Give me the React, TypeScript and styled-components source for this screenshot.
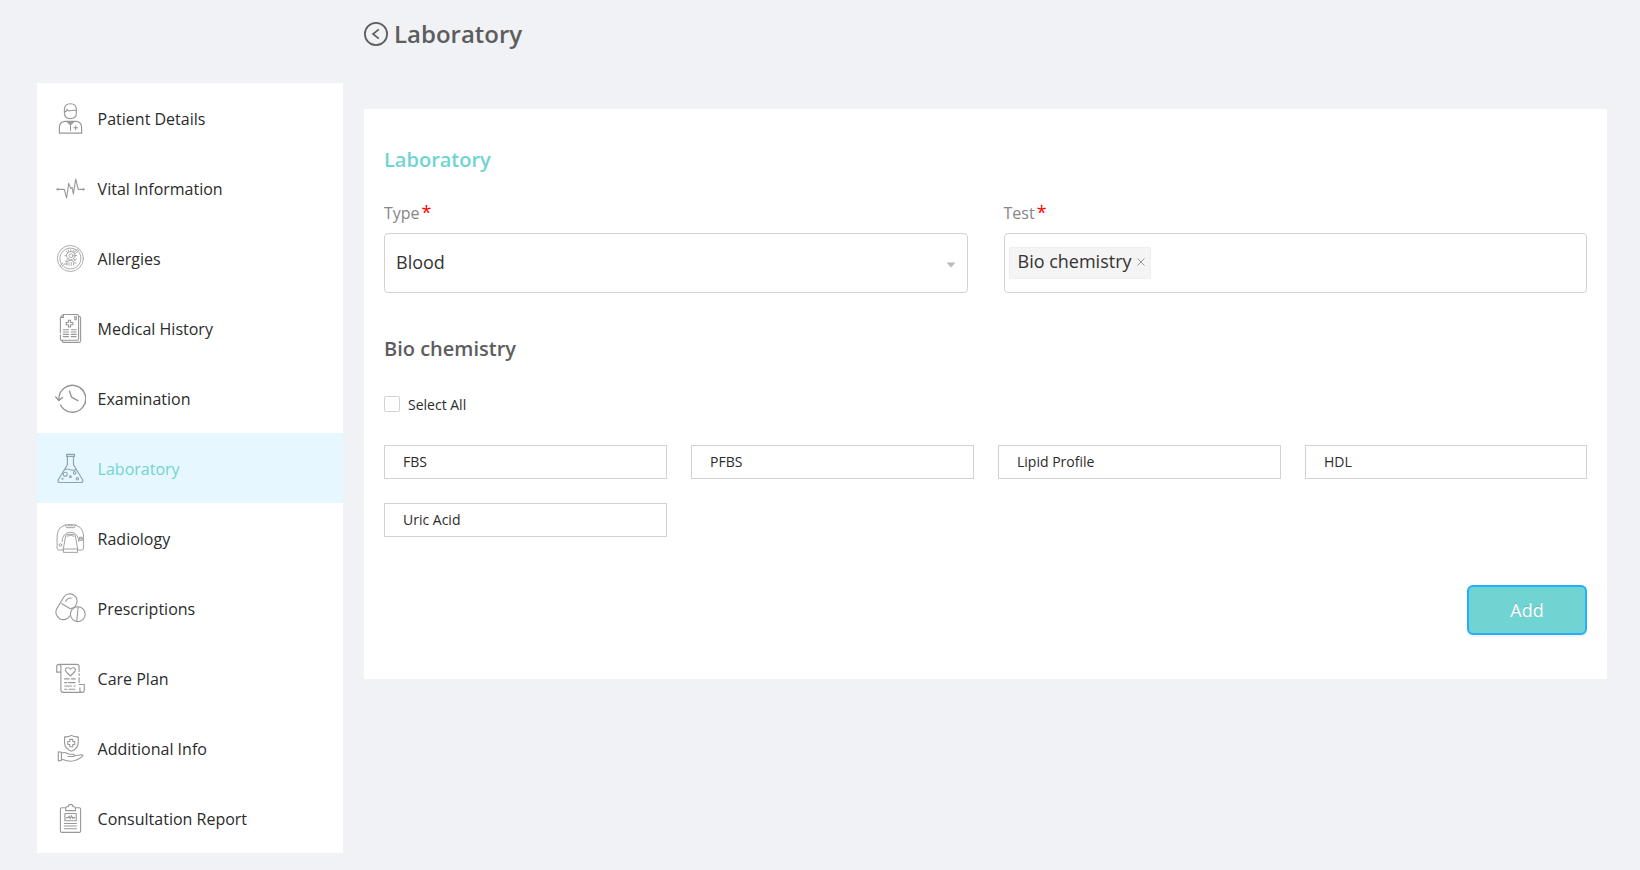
import React from 'react';
import styled, { createGlobalStyle } from 'styled-components';

const GlobalStyle = createGlobalStyle`
  *, *::before, *::after { box-sizing: border-box; }
  body {
    margin: 0;
    background: #f0f2f5;
    font-family: 'Open Sans', sans-serif;
    color: #2b2b2b;
  }
  h1, h2, h3 { margin: 0; font-weight: 600; }
`;

const Page = styled.div`
  display: flex;
  align-items: flex-start;
  min-height: 870px;
  padding: 0 33px 0 37px;
`;

const Sidebar = styled.nav`
  flex: 0 0 306px;
  margin-top: 83px;
  background: #fff;
`;

const NavItem = styled.a<{ $active?: boolean }>`
  display: flex;
  align-items: center;
  height: 70px;
  padding: 0 17px 0;
  font-size: 16px;
  line-height: 24px;
  color: ${(p) => (p.$active ? '#70d4d2' : '#2b2b2b')};
  background: ${(p) => (p.$active ? '#e6f7ff' : '#fff')};
`;

const NavIcon = styled.svg<{ $active?: boolean }>`
  flex: none;
  width: 32px;
  height: 32px;
  margin: 2px 11.6px 0 0;
  fill: none;
  stroke: ${(p) => (p.$active ? '#8aa6b3' : '#989898')};
  stroke-width: 1.1;
  stroke-linecap: round;
  stroke-linejoin: round;
`;

const NavLabel = styled.span`
  padding-top: 2px;
`;

const Main = styled.main`
  flex: 1;
  margin-left: 21px;
`;

const Header = styled.header`
  display: flex;
  align-items: center;
  height: 109px;
  padding-bottom: 41px;
`;

const BackIcon = styled.svg`
  width: 24px;
  height: 24px;
  margin-right: 6px;
  fill: none;
  stroke: #5d5d5d;
`;

const PageTitle = styled.h1`
  font-size: 24px;
  line-height: 36px;
  color: #5d5d5d;
`;

const Panel = styled.section`
  height: 570px;
  padding: 36px 20px 0;
  background: #fff;
`;

const SectionTitle = styled.h2`
  font-size: 20px;
  line-height: 30px;
  color: #70d4d2;
`;

const FieldRow = styled.div`
  display: grid;
  grid-template-columns: 1fr 1fr;
  column-gap: 36px;
  margin-top: 26px;
`;

const Label = styled.div`
  display: flex;
  height: 32px;
  font-size: 16px;
  line-height: 24px;
  color: #868686;
`;

const Required = styled.span`
  margin-left: 2px;
  font-size: 18px;
  line-height: 22px;
  color: #f00;
`;

const Control = styled.div<{ $tags?: boolean }>`
  display: flex;
  align-items: center;
  justify-content: space-between;
  height: 60px;
  padding: ${(p) => (p.$tags ? '0 4px' : '0 11px')};
  border: 1px solid #d2d2d2;
  border-radius: 4px;
  font-size: 18px;
  color: #333;
`;

const ControlValue = styled.span`
  padding-bottom: 2px;
`;

const Caret = styled.svg`
  width: 10px;
  height: 6px;
  margin-top: 3px;
  fill: #b9b9b9;
`;

const Tag = styled.span`
  display: flex;
  align-items: center;
  height: 32px;
  padding: 0 5px 5px 8px;
  border: 1px solid #eee;
  border-radius: 2px;
  background: #f4f4f4;
`;

const TagRemove = styled.svg`
  width: 8px;
  height: 8px;
  margin: 3px 0 0 5px;
  stroke: #999;
`;

const GroupTitle = styled.h3`
  margin-top: 41px;
  font-size: 20px;
  line-height: 30px;
  color: #5d5d5d;
`;

const CheckRow = styled.label`
  display: flex;
  align-items: center;
  height: 20px;
  margin-top: 30px;
  font-size: 14px;
`;

const CheckBox = styled.span`
  width: 16px;
  height: 16px;
  margin-right: 8px;
  border: 1px solid #d2d2d2;
  border-radius: 2px;
`;

const TestGrid = styled.div`
  display: grid;
  grid-template-columns: repeat(3, 283px) 1fr;
  gap: 24px;
  margin-top: 31px;
`;

const TestCard = styled.div`
  height: 34px;
  padding-left: 18px;
  border: 1px solid #d2d2d2;
  font-size: 14px;
  line-height: 32px;
`;

const Actions = styled.div`
  display: flex;
  justify-content: flex-end;
  margin-top: 48px;
`;

const AddButton = styled.button`
  width: 120px;
  height: 50px;
  padding: 0;
  border: 2px solid #24aeff;
  border-radius: 6px;
  background: #70d4d2;
  box-shadow: 0 2px 0 rgba(0, 0, 0, 0.045);
  color: #fff;
  font: 400 18px 'Open Sans', sans-serif;
  text-shadow: 0 -1px 0 rgba(0, 0, 0, 0.12);
`;

const navigation: { label: string; active?: boolean; icon: React.ReactNode }[] = [
  {
    label: 'Patient Details',
    icon: (
      <>
        <path d="M10.4 6.5Q10.5.8 16.4.8t6 5.7v3.2q0 5.9-6 5.9t-6-5.9z" />
        <path d="M10.7 8.9q1.8-.2 2.3-2.6 1 2 3.2 1.4t6.1-.3" />
        <path d="M5.4 30.2v-5.8q0-5.3 5.4-6h11.4q5.4.7 5.4 6v5.8z" strokeWidth="1.2" />
        <path d="M13 18.6h7l-3.5 3.2z" fill="#a0a0a0" />
        <path d="M16.5 22v5.6M21.7 22.8v4M19.7 24.8h4" />
      </>
    ),
  },
  {
    label: 'Vital Information',
    icon: (
      <>
        <path d="M4 16.4h6.3l2.3 8.6 2.1-14.6 2.1 5.2 1.4-1.1 1.2 6.7 2.3-15.1 2.5 10.3H29" />
        <circle cx="3.5" cy="16.4" r=".6" />
        <circle cx="29.6" cy="16.4" r=".6" />
      </>
    ),
  },
  {
    label: 'Allergies',
    icon: (
      <g strokeWidth=".8">
        <circle cx="16.4" cy="15.5" r="13" />
        <path d="M24.8 8.8a10.7 10.7 0 0 1-15 15M8 22.2a10.7 10.7 0 0 1 15-15M25 7.2l-4 4M11 20.6l-3.4 3.3M23.5 6l-3 3M9 20l-2.5 2.4" />
        <circle cx="16.8" cy="12.7" r="4.2" />
        <circle cx="17" cy="12.8" r="2" />
        <path d="M16.8 6.8v1.7M12.6 8.5l1.2 1.2M10.8 12.7h1.8M12.5 17l1.3-1.3M21 12.7h1.7M19.8 15.7l1.4 1.4M20 9.8l1.3-1.3M14 6.8l.8 2M19.7 6.9l-.8 1.9" />
        <path d="M13 22v-2.3q0-2.2 2.2-2.2h2.1q2.2 0 2.2 2.2V22M11.5 18.3h2M11.3 21h1.5M15 19.6v2.8M17.3 19.6v2.8M20 20h2.2M20 17.8l2.5-1.6" />
      </g>
    ),
  },
  {
    label: 'Medical History',
    icon: (
      <>
        <path d="M9.4 1.5h13.8q1.4 0 1.4 1.4v22.9q0 1.5-1.4 1.5H7.9q-1.5 0-1.5-1.5V22M6.4 20V4.5l3-3v3h-3M24.8 3.3q1.8 0 1.8 1.7v22.7q0 1.7-1.8 1.7H9.2l-1.5-1.7" />
        <path d="M20.8 3.2v3.3q1.5.9 1.5-.5V3.2" />
        <path d="M14.4 7.2h2.2v2.3h2.3v2.2h-2.3V14h-2.2v-2.3h-2.3V9.5h2.3z" />
        <path d="M9.3 16.7h5.2M17.2 16.7h5M9.3 19h5.2M17.2 19h5M9.3 21.4h5.2M17.2 21.4h5M9.3 23.6h5.2M17.2 23.6h5" />
      </>
    ),
  },
  {
    label: 'Examination',
    icon: (
      <g strokeWidth="1.4" stroke="#949494">
        <path d="M5 16.8A13.4 13.4 0 1 1 6.5 22" />
        <path d="M1.7 14l3.2 3.6 3.6-3.2M15.4 8.1l2.1 6 6.3 3.5" />
      </g>
    ),
  },
  {
    label: 'Laboratory',
    active: true,
    icon: (
      <>
        <path d="M12.6 1.4h7.9v2h-7.9zM13.4 3.6v8.1L4.3 26.8q-1.2 2.7 1.8 2.7h20.7q3 0 1.8-2.7l-9.1-15.1V3.6" strokeWidth="1.2" />
        <path d="M10.8 16.7q2.5-1.4 5.5 0 2.8 1.4 5.7-.5" />
        <circle cx="11.3" cy="21.3" r="2" />
        <circle cx="20.7" cy="19.8" r="1.3" />
        <circle cx="16.4" cy="23.8" r=".9" />
        <circle cx="23.4" cy="25.8" r="1.2" />
        <circle cx="8.5" cy="25.8" r=".5" />
      </>
    ),
  },
  {
    label: 'Radiology',
    icon: (
      <g strokeWidth=".9">
        <path d="M9.3 27H5q-1.9 0-1.9-1.9V13Q3.7 1.4 16.4 1.4T29.6 13v12.1q0 1.9-1.8 1.9h-4" />
        <path d="M11.5 1.9l1.2 2.8h7.5l1.3-2.8M14 2.8h5" />
        <path d="M8.1 18.5A8.4 8.4 0 1 1 24.8 18.5" />
        <path d="M9.4 25.6l2.2-12.4q.7-1.9 2.4-1.9h5q1.7 0 2.4 1.9l2.2 12.4zM13 13.2q3.5-2.4 7 0M9.4 25.8v3.6h14.2v-3.6" />
        <circle cx="6.4" cy="22" r="1.3" />
        <path d="M26 14.2h2.3v3.2H26zM26 15.8h2.3" />
      </g>
    ),
  },
  {
    label: 'Prescriptions',
    icon: (
      <>
        <path d="M2.9 15.6L9.7 4.2A7.1 7.1 0 0 1 21.9 12l-1.4 2.4M15.7 22.9A7.1 7.1 0 1 1 2.9 15.6M7.8 10.7l8.1 4.8" />
        <path d="M11.7 8.5q1.8-3.8 5.5-3.4" />
        <circle cx="23.8" cy="21.2" r="7.4" />
        <path d="M16.4 15.7l4.2-1.3M24.2 14l-1.5 14.3" />
      </>
    ),
  },
  {
    label: 'Care Plan',
    icon: (
      <>
        <path d="M6.9 9.1H2.7V3.5q0-2.1 2.2-2.1h18q2.2 0 2.2 2.1v5M25.1 10.5v2M25.1 14.5v5M4.9 1.4q2 0 2 2.3v23.4q0 2.3 2.3 2.3h18.9M25.1 21.5h5.2v5.8q0 2.1-2.2 2.1-2.2 0-2.2-2.1v-2.5" />
        <path d="M16.4 13L12 8.5q-1.5-2.7 1-3.7 1.8-.5 3.4 1.3 1.7-1.8 3.5-1.3 2.5 1 .9 3.7z" />
        <path d="M10.6 15.9h4.6M17.5 15.9h3.8M10.6 19.6h2M14.5 19.6h6.7M10.6 23h7M20 23h1.2M10.6 26.3h2.2M15 26.3h6" />
      </>
    ),
  },
  {
    label: 'Additional Info',
    icon: (
      <>
        <path d="M17.4 2.4q3 1.8 6.8 1.4v6q0 5.8-6.8 8.4-6.8-2.6-6.8-8.4v-6q3.8.4 6.8-1.4z" />
        <path d="M15.8 6.4h3v2.1h2v3h-2v2.2h-3v-2.2h-2v-3h2z" />
        <path d="M4.3 18.8l3.1.4v8.2l-3.1.6zM7.4 20.1q3.3-1.3 5.5.1l2.7 1.1h4q1.8 1.2-.2 2.2H14M19.9 23l7.3-1.2q3 .2 1 1.8-5.8 4.3-11.4 4.7-3.3 0-9.1-2" />
      </>
    ),
  },
  {
    label: 'Consultation Report',
    icon: (
      <>
        <path d="M11.7 4.8H7.8q-1.4 0-1.4 1.4v21.7q0 1.5 1.4 1.5h17.4q1.4 0 1.4-1.5V6.2q0-1.4-1.4-1.4h-3.8" />
        <path d="M11.7 7.6V4.9q0-1.1 1.2-1.1h1.2q.4-2.4 2.5-2.4t2.5 2.4h1.1q1.2 0 1.2 1.1v2.7zM10.9 10.5h11.3v7.2H10.9z" />
        <path d="M12.3 14.6h1.9l1.1-1.6 1 2.7 1.3-3.1 1.3 3 .8-1h1M10.3 20.5h12.2M10.3 23h12.2M10.3 25.7h12.2" />
      </>
    ),
  },
];

const tests = ['FBS', 'PFBS', 'Lipid Profile', 'HDL', 'Uric Acid'];

export default function App() {
  return (
    <>
      <GlobalStyle />
      <Page>
        <Sidebar>
          {navigation.map(({ label, active, icon }) => (
            <NavItem key={label} $active={active}>
              <NavIcon viewBox="0 0 32 32" $active={active}>
                {icon}
              </NavIcon>
              <NavLabel>{label}</NavLabel>
            </NavItem>
          ))}
        </Sidebar>
        <Main>
          <Header>
            <BackIcon viewBox="0 0 24 24">
              <circle cx="12" cy="12" r="11.1" strokeWidth="1.8" />
              <path d="M14.8 7.4L9 12l5.8 4.6" strokeWidth="1.7" />
            </BackIcon>
            <PageTitle>Laboratory</PageTitle>
          </Header>
          <Panel>
            <SectionTitle>Laboratory</SectionTitle>
            <FieldRow>
              <div>
                <Label>
                  Type<Required>*</Required>
                </Label>
                <Control>
                  <ControlValue>Blood</ControlValue>
                  <Caret viewBox="0 0 10 6">
                    <path d="M.5.5h9L5 5.5z" />
                  </Caret>
                </Control>
              </div>
              <div>
                <Label>
                  Test<Required>*</Required>
                </Label>
                <Control $tags>
                  <Tag>
                    Bio chemistry
                    <TagRemove viewBox="0 0 8 8">
                      <path d="M.5.5l7 7M7.5.5l-7 7" />
                    </TagRemove>
                  </Tag>
                </Control>
              </div>
            </FieldRow>
            <GroupTitle>Bio chemistry</GroupTitle>
            <CheckRow>
              <CheckBox />
              Select All
            </CheckRow>
            <TestGrid>
              {tests.map((name) => (
                <TestCard key={name}>{name}</TestCard>
              ))}
            </TestGrid>
            <Actions>
              <AddButton>Add</AddButton>
            </Actions>
          </Panel>
        </Main>
      </Page>
    </>
  );
}
